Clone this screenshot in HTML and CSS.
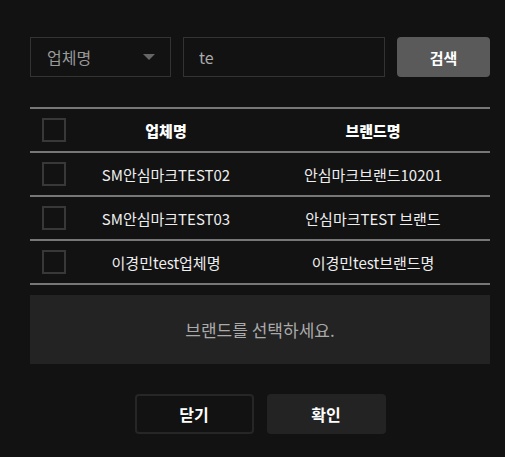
FILE: index.html
```html
<!DOCTYPE html>
<html>
<head>
    <title>브랜드 검색</title>
    <meta name="viewport" content="width=device-width, initial-scale=1.0">
    <link rel="stylesheet" href="styles.css">
</head>
<body>
    <div class="popup">
        <div class="search-bar">
            <div class="select-box">
                <span>업체명</span>
                <span class="arrow"></span>
            </div>
            <input type="text" class="search-input" value="te">
            <button class="btn-search">검색</button>
        </div>

        <table class="brand-table">
            <tr>
                <th class="col-check"><span class="check"></span></th>
                <th class="col-company">업체명</th>
                <th>브랜드명</th>
            </tr>
            <tr>
                <td class="col-check"><span class="check"></span></td>
                <td>SM안심마크TEST02</td>
                <td>안심마크브랜드10201</td>
            </tr>
            <tr>
                <td class="col-check"><span class="check"></span></td>
                <td>SM안심마크TEST03</td>
                <td>안심마크TEST 브랜드</td>
            </tr>
            <tr>
                <td class="col-check"><span class="check"></span></td>
                <td>이경민test업체명</td>
                <td>이경민test브랜드명</td>
            </tr>
        </table>

        <div class="message">브랜드를 선택하세요.</div>

        <div class="actions">
            <button class="btn-close">닫기</button>
            <button class="btn-ok">확인</button>
        </div>
    </div>
</body>
</html>
```

FILE: styles.css
```css
body {
    margin: 0;
    background-color: #121212;
    font-family: "Noto Sans CJK KR", "Noto Sans", sans-serif;
    color: #eee;
}
.popup {
    width: 460px;
    padding: 37px 15px 0 30px;
}
.search-bar {
    display: flex;
    height: 40px;
}
.select-box {
    width: 141px;
    box-sizing: border-box;
    border: 1px solid #333;
    display: flex;
    align-items: center;
    justify-content: space-between;
    padding: 0 15px 0 16px;
    font-size: 16px;
    color: #999;
}
.arrow {
    width: 0;
    height: 0;
    border-left: 6px solid transparent;
    border-right: 6px solid transparent;
    border-top: 6px solid #666;
}
.search-input {
    width: 202px;
    margin-left: 12px;
    box-sizing: border-box;
    border: 1px solid #333;
    background-color: #121212;
    color: #aaa;
    font-family: inherit;
    font-size: 16px;
    padding: 0 15px;
    outline: none;
}
.btn-search {
    width: 93px;
    margin-left: 12px;
    border: none;
    border-radius: 4px;
    background-color: #5a5a5a;
    color: #fff;
    font-family: inherit;
    font-size: 15px;
    font-weight: bold;
}
.brand-table {
    width: 100%;
    margin-top: 30px;
    border-collapse: collapse;
    border-top: 2px solid #777;
}
th, td {
    height: 42px;
    padding: 0;
    text-align: center;
    font-size: 15px;
    border-bottom: 2px solid #777;
}
th {
    font-weight: 900;
    color: #fff;
}
td {
    color: #eee;
}
.col-check {
    width: 46px;
    text-align: left;
}
.col-company {
    width: 180px;
}
.check {
    display: block;
    width: 20px;
    height: 20px;
    margin-left: 12px;
    border: 2px solid #383838;
}
.message {
    margin-top: 10px;
    height: 69px;
    background-color: #232323;
    color: #aaa;
    font-size: 17px;
    display: flex;
    align-items: center;
    justify-content: center;
}
.actions {
    display: flex;
    justify-content: center;
    gap: 13px;
    margin-top: 30px;
}
.actions button {
    width: 119px;
    height: 40px;
    border-radius: 4px;
    font-family: inherit;
    font-size: 16px;
    font-weight: bold;
    color: #fff;
}
.btn-close {
    background-color: #121212;
    border: 2px solid #262626;
}
.btn-ok {
    background-color: #232323;
    border: none;
}
```
